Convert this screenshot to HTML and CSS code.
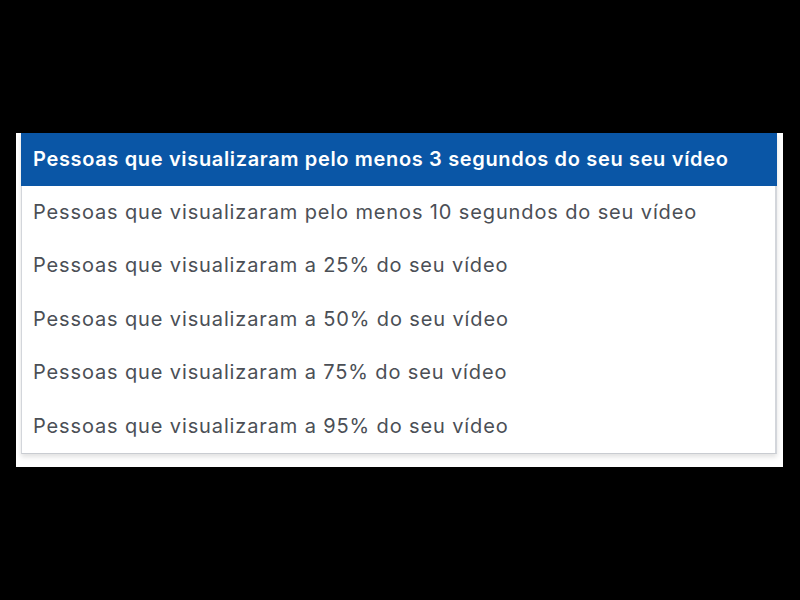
FILE: index.html
```html
<!DOCTYPE html>
<html>
<head>
<meta charset="utf-8">
<link rel="stylesheet" href="styles.css">
</head>
<body>
<div class="stage">
  <div class="panel">
    <ul class="menu">
      <li class="item selected">Pessoas que visualizaram pelo menos 3 segundos do seu seu vídeo</li>
      <li class="item">Pessoas que visualizaram pelo menos 10 segundos do seu vídeo</li>
      <li class="item">Pessoas que visualizaram a 25% do seu vídeo</li>
      <li class="item">Pessoas que visualizaram a 50% do seu vídeo</li>
      <li class="item">Pessoas que visualizaram a 75% do seu vídeo</li>
      <li class="item">Pessoas que visualizaram a 95% do seu vídeo</li>
    </ul>
  </div>
</div>
</body>
</html>
```
FILE: styles.css
```css
html, body {
  margin: 0;
  padding: 0;
  background: #000;
  width: 800px;
  height: 600px;
  overflow: hidden;
}
.stage {
  padding: 133px 17px 0 16px;
}
.panel {
  background: #fff;
  padding: 0 6px 13px 5px;
}
.menu {
  list-style: none;
  margin: 0;
  padding: 0;
  border-left: 1px solid #d3d6db;
  border-right: 2px solid #d3d6db;
  border-bottom: 1px solid #c9ccd1;
  box-shadow: 0 3px 5px rgba(0,0,0,0.12);
}
.item {
  height: 53.4px;
  box-sizing: border-box;
  display: flex;
  align-items: center;
  padding-left: 11px;
  padding-bottom: 2px;
  font-family: Inter, "Liberation Sans", Arial, sans-serif;
  font-size: 20px;
  letter-spacing: 0.87px;
  color: #4b4f56;
  white-space: nowrap;
}
.item.selected {
  background: #0a56a6;
  color: #fff;
  font-weight: 600;
  letter-spacing: 0.66px;
  margin-left: -1px;
  margin-right: -2px;
  padding-left: 12px;
}
```
